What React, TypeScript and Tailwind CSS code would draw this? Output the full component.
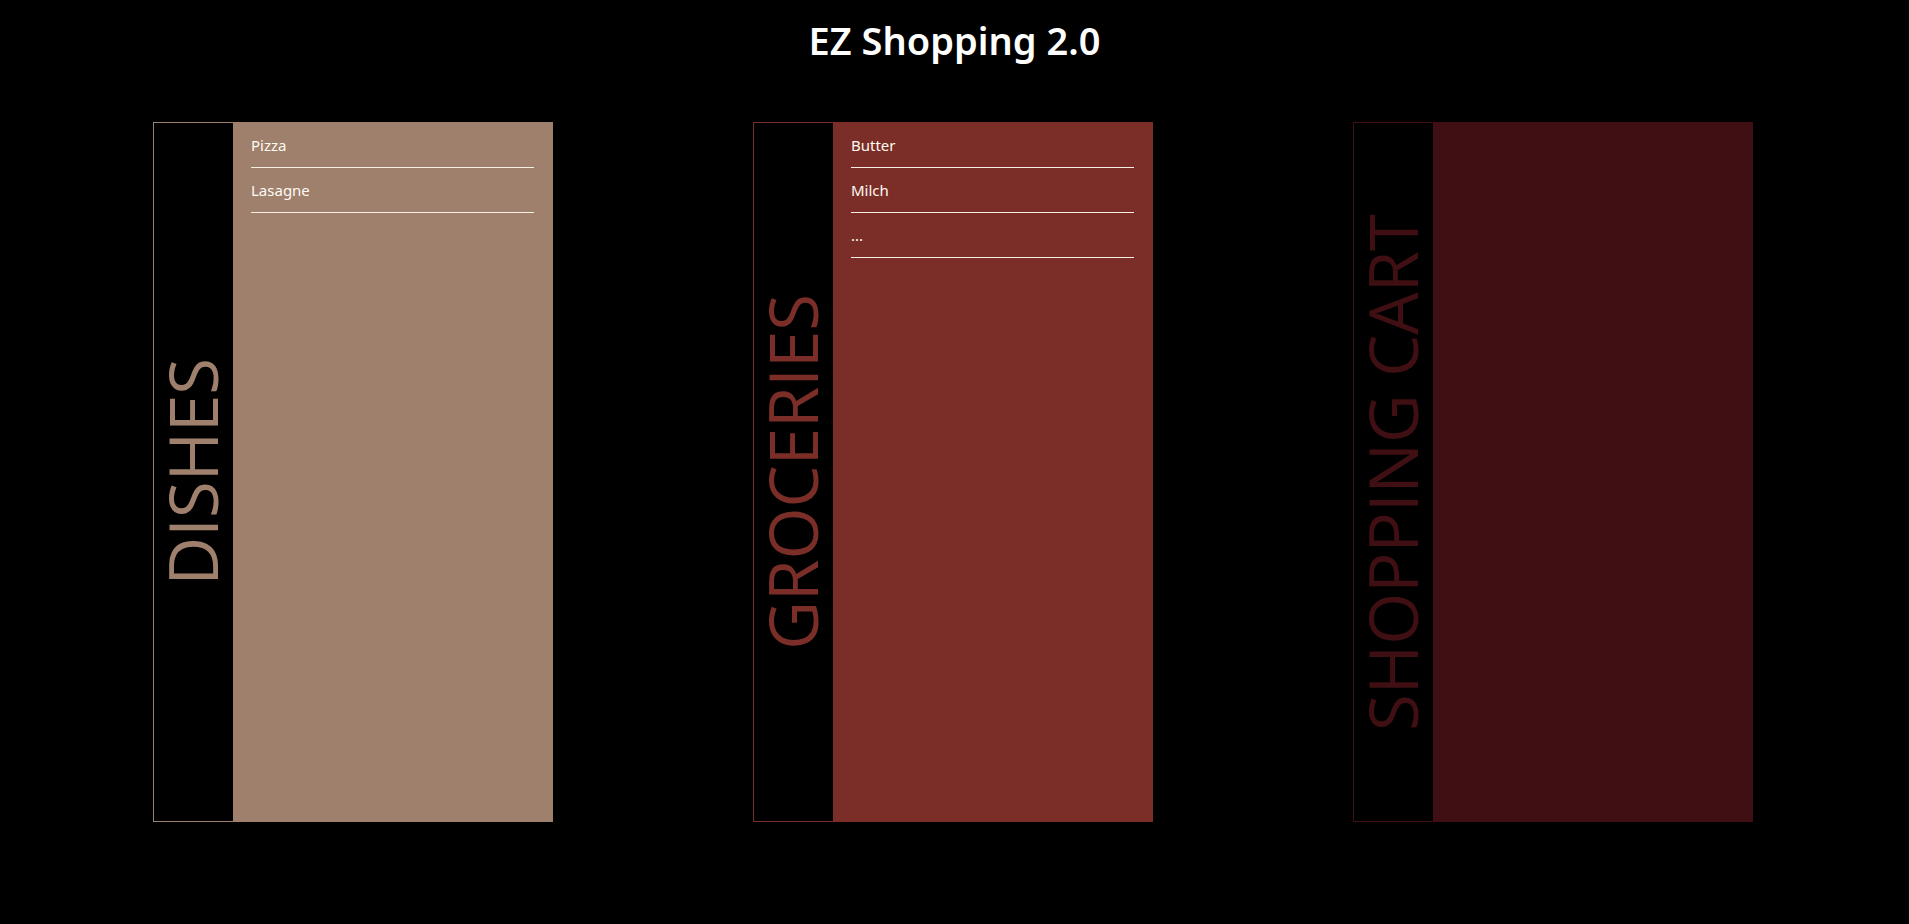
import React from "react";

type Panel = {
  title: string;
  bg: string;
  items: string[];
};

const panels: Panel[] = [
  { title: "DISHES", bg: "dishes", items: ["Pizza", "Lasagne"] },
  { title: "GROCERIES", bg: "groceries", items: ["Butter", "Milch", "..."] },
  { title: "SHOPPING CART", bg: "cart", items: [] },
];

const styles: Record<string, { border: string; bg: string; text: string }> = {
  dishes: { border: "border-[#9e806c]", bg: "bg-[#9e806c]", text: "text-[#9e806c]" },
  groceries: { border: "border-[#7a2e27]", bg: "bg-[#7a2e27]", text: "text-[#7a2e27]" },
  cart: { border: "border-[#3f0f13]", bg: "bg-[#3f0f13]", text: "text-[#3f0f13]" },
};

function Column({ panel }: { panel: Panel }) {
  const s = styles[panel.bg];
  return (
    <div className={`flex h-[700px] w-[400px] border ${s.border}`}>
      <div className="flex w-[79px] shrink-0 items-center justify-center bg-black pr-[2px]">
        <span
          className={`rotate-180 whitespace-nowrap text-[67px] font-normal leading-none [writing-mode:vertical-rl] ${s.text}`}
          style={{ fontFamily: '"Open Sans", "Noto Sans", sans-serif' }}
        >
          {panel.title}
        </span>
      </div>
      <div className={`flex-1 px-[18px] ${s.bg}`}>
        {panel.items.map((it) => (
          <div
            key={it}
            className="border-b border-[#f5efe6] py-3 text-[15px] leading-5 text-[#fffaf2]"
          >
            {it}
          </div>
        ))}
      </div>
    </div>
  );
}

export default function App() {
  return (
    <div
      className="min-h-[924px] w-full bg-black"
      style={{ fontFamily: '"Noto Sans", "Open Sans", sans-serif' }}
    >
      <h1 className="pt-[14px] text-center text-[38px] font-semibold leading-[52px] text-white">
        EZ Shopping 2.0
      </h1>
      <div className="mt-[56px] flex justify-center gap-[200px] pr-[3px]">
        {panels.map((p) => (
          <Column key={p.title} panel={p} />
        ))}
      </div>
    </div>
  );
}
